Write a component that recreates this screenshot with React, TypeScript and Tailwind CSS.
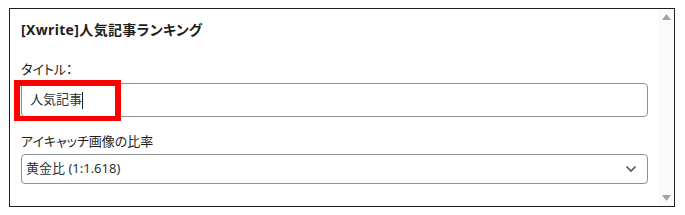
import React from "react";

export default function App() {
  const font = "font-['Noto_Sans','Noto_Sans_CJK_JP',sans-serif] [font-feature-settings:'palt']";
  return (
    <div className={`relative w-[685px] h-[215px] bg-white overflow-hidden ${font}`}>
      <div className="ml-[9px] mt-[8px] w-[666px] h-[199px] border border-[#1e1e1e] flex">
        <div className="flex-1 pl-[11px] pr-[10px] pt-[11px] flex flex-col">
          <div className="text-[14px] leading-[20px] font-bold tracking-[0.35px] text-[#1e1e1e]">[Xwrite]人気記事ランキング</div>
          <div className="mt-[19px] text-[13px] leading-[20px] text-[#1e1e1e]">タイトル：</div>
          <div className="mt-[4px] h-[34px] border border-[#8c8f94] rounded-[4px] flex items-center pl-[8px] text-[13px] text-[#2c3338]">
            <span>人気記事</span>
            <span className="inline-block w-px h-[17px] bg-[#1e1e1e]" />
          </div>
          <div className="mt-[14px] text-[13px] leading-[20px] text-[#1e1e1e]">アイキャッチ画像の比率</div>
          <div className="mt-[3px] h-[30px] border border-[#8c8f94] rounded-[4px] flex items-center justify-between pl-[4px] pr-[10px] text-[13px] text-[#2c3338]">
            <span>黄金比 (1:1.618)</span>
            <svg width="12" height="8" viewBox="0 0 12 8" fill="none">
              <path d="M1.5 1.5 L6 6 L10.5 1.5" stroke="#50575e" strokeWidth="1.6" />
            </svg>
          </div>
        </div>
        <div className="w-[16px] bg-[#fafafa] flex flex-col items-center justify-between pt-[5px] pb-[5px]">
          <svg width="9" height="6" viewBox="0 0 9 6"><path d="M0 6 L4.5 0 L9 6 Z" fill="#a3a3a3" /></svg>
          <svg width="9" height="6" viewBox="0 0 9 6"><path d="M0 0 L4.5 6 L9 0 Z" fill="#a3a3a3" /></svg>
        </div>
      </div>
      <div className="absolute left-[14px] top-[80px] w-[107px] h-[41px] border-[6px] border-b-[5px] border-[#ff0000]" />
    </div>
  );
}
